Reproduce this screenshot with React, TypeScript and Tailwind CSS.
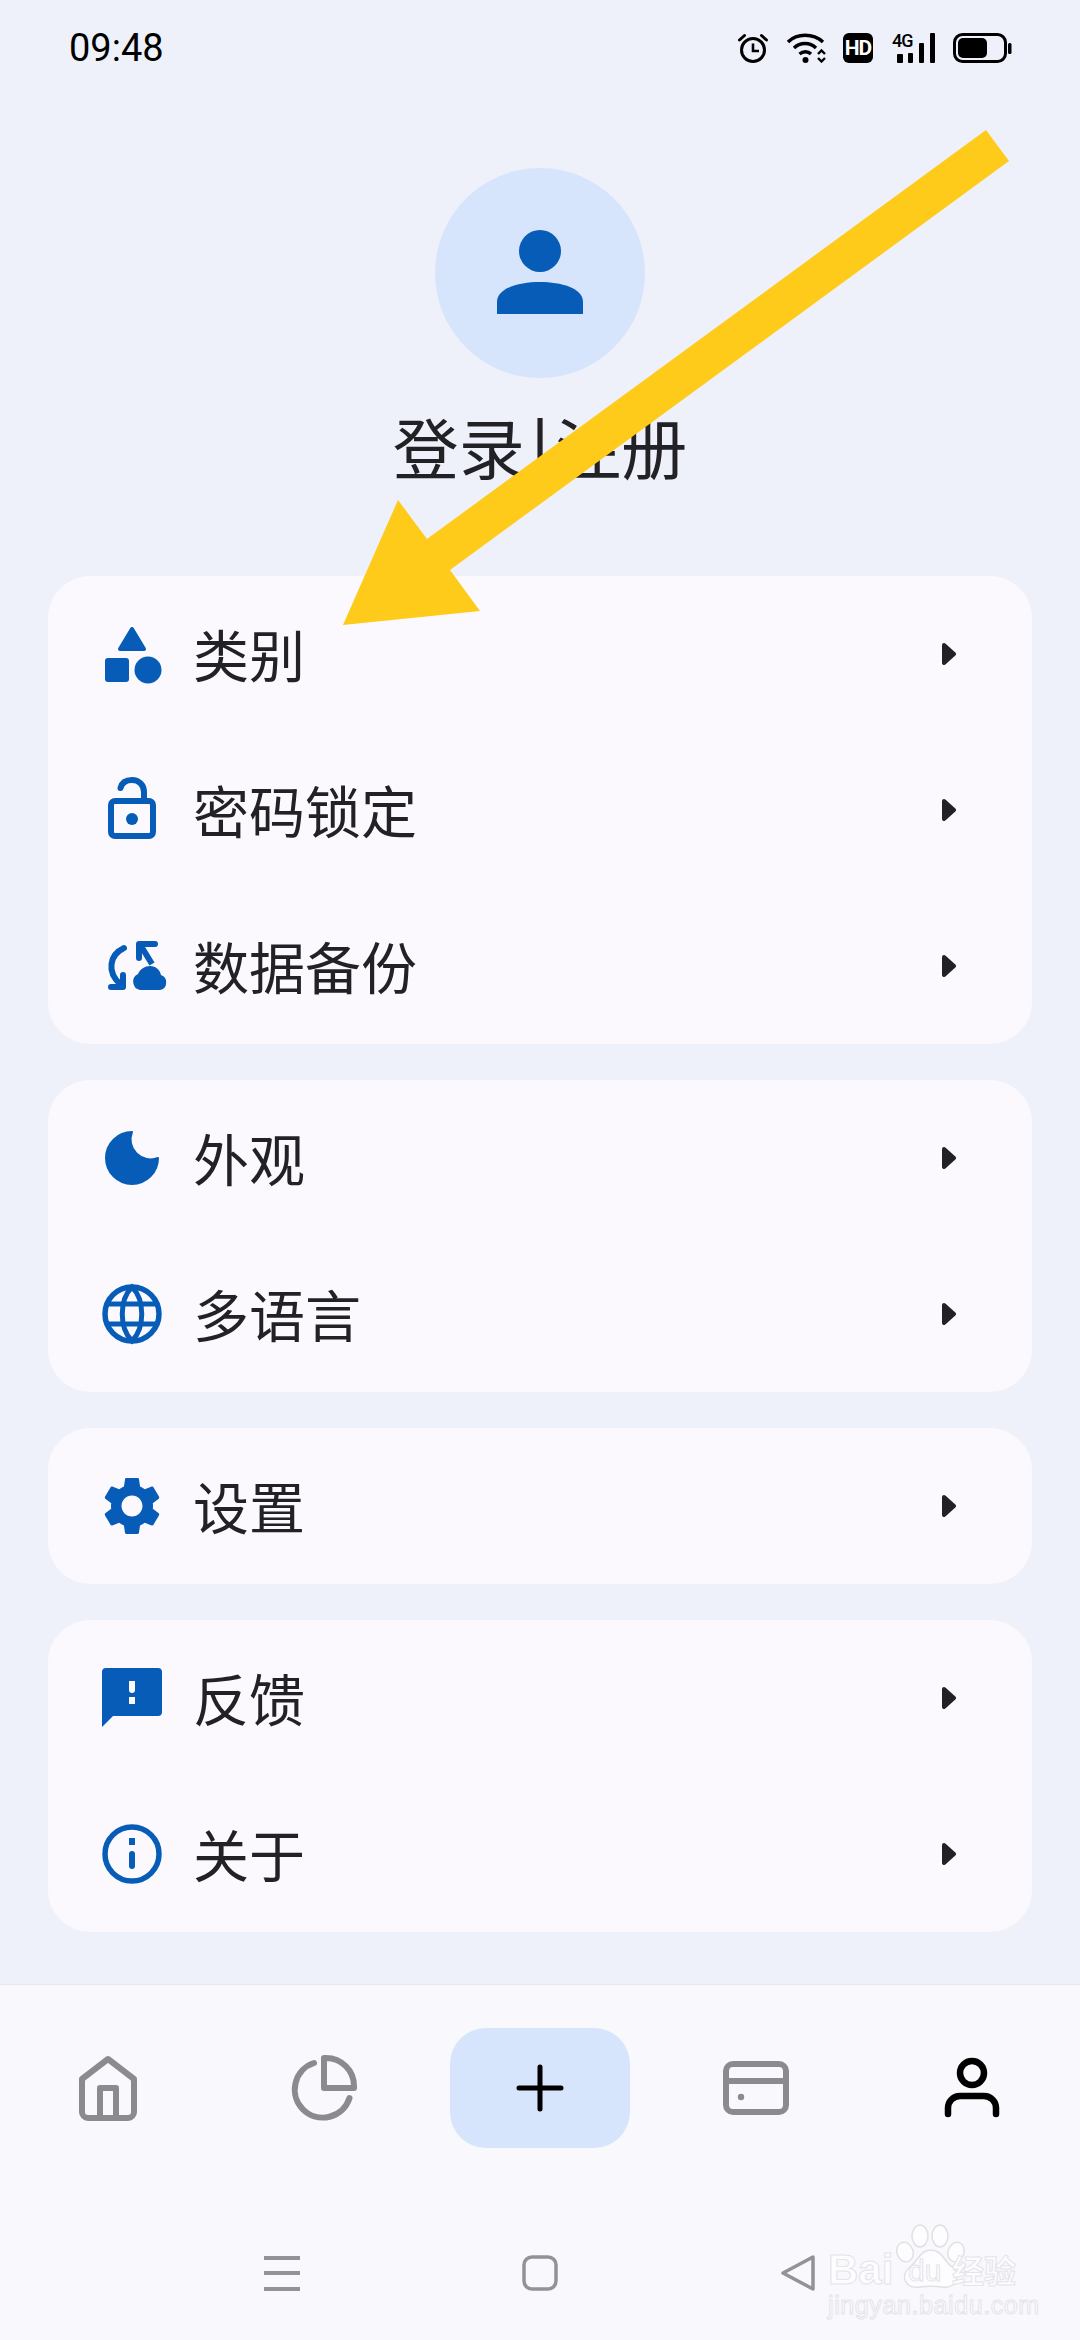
import type { ReactNode } from "react";

const BLUE = "#065cb6";
const GRAY = "#8b8b8f";

function Box({ children, size = 64 }: { children: ReactNode; size?: number }) {
  return (
    <svg width={size} height={size} viewBox="0 0 64 64" className="shrink-0 overflow-visible">
      {children}
    </svg>
  );
}

const CategoryIcon = () => (
  <Box>
    <path d="M32 7 L44 27 H20 Z" fill={BLUE} stroke={BLUE} strokeWidth="4" strokeLinejoin="round" />
    <rect x="5" y="36" width="24" height="24" rx="3" fill={BLUE} />
    <circle cx="48" cy="48" r="13.5" fill={BLUE} />
  </Box>
);

const LockIcon = () => (
  <Box>
    <rect x="11" y="23" width="42" height="35" rx="4" fill="none" stroke={BLUE} strokeWidth="6" />
    <circle cx="32" cy="41" r="6" fill={BLUE} />
    <path d="M20.5 10 C22 4 27 2 32 2 C39 2 44 7 44 14 V22" fill="none" stroke={BLUE} strokeWidth="6" strokeLinecap="round" />
  </Box>
);

const BackupIcon = () => (
  <Box>
    <g fill="none" stroke={BLUE} strokeWidth="6" strokeLinecap="round" strokeLinejoin="round">
      <path d="M24 14 C9 21 7 38 20 50" />
      <path d="M23 41 V53 H11" />
      <path d="M55 10 H39 V24" />
      <path d="M41 12 L52 30" strokeLinecap="butt" />
    </g>
    <path d="M40 56 A8.5 8.5 0 0 1 38 40 C40 35 45 32 50 32 C56 32 60 36 61 41 A7.8 7.8 0 0 1 60 56 Z" fill={BLUE} />
  </Box>
);

const MoonIcon = () => (
  <Box>
    <path d="M32 6 A26 26 0 1 0 58 32 A20 20 0 0 1 32 6 Z" fill={BLUE} stroke={BLUE} strokeWidth="2" strokeLinejoin="round" />
  </Box>
);

const GlobeIcon = () => (
  <Box>
    <g fill="none" stroke={BLUE}>
      <circle cx="32" cy="32" r="27" strokeWidth="5.5" />
      <path d="M32 5 C19 18 19 46 32 59 C45 46 45 18 32 5 Z" strokeWidth="5" />
      <path d="M6 22 H58 M6 42 H58" strokeWidth="5" />
    </g>
  </Box>
);

const GearIcon = () => (
  <Box>
    <svg x="-3" y="-3" width="70" height="70" viewBox="0 0 24 24">
      <path
        fill={BLUE}
        d="M19.14 12.94c.04-.3.06-.61.06-.94 0-.32-.02-.64-.07-.94l2.03-1.58c.18-.14.23-.41.12-.61l-1.92-3.32c-.12-.22-.37-.29-.59-.22l-2.39.96c-.5-.38-1.03-.7-1.62-.94l-.36-2.54c-.04-.24-.24-.41-.48-.41h-3.84c-.24 0-.43.17-.47.41l-.36 2.54c-.59.24-1.13.57-1.62.94l-2.39-.96c-.22-.08-.47 0-.59.22L2.74 8.87c-.12.21-.08.47.12.61l2.03 1.58c-.05.3-.09.63-.09.94s.02.64.07.94l-2.03 1.58c-.18.14-.23.41-.12.61l1.92 3.32c.12.22.37.29.59.22l2.39-.96c.5.38 1.03.7 1.62.94l.36 2.54c.05.24.24.41.48.41h3.84c.24 0 .44-.17.47-.41l.36-2.54c.59-.24 1.13-.56 1.62-.94l2.39.96c.22.08.47 0 .59-.22l1.92-3.32c.12-.22.07-.47-.12-.61l-2.01-1.58zM12 15.6c-1.98 0-3.6-1.62-3.6-3.6s1.62-3.6 3.6-3.6 3.6 1.62 3.6 3.6-1.62 3.6-3.6 3.6z"
      />
    </svg>
  </Box>
);

const FeedbackIcon = () => (
  <Box>
    <path
      fillRule="evenodd"
      fill={BLUE}
      d="M6 2 H58 A4 4 0 0 1 62 6 V46 A4 4 0 0 1 58 50 H13 L2 61 V6 A4 4 0 0 1 6 2 Z M29 15 V24 A3 3 0 0 0 35 24 V15 Z M29 31 V38 H35 V31 Z"
    />
  </Box>
);

const InfoIcon = () => (
  <Box>
    <circle cx="32" cy="32" r="27" fill="none" stroke={BLUE} strokeWidth="5.5" />
    <rect x="29" y="16" width="6" height="7" fill={BLUE} />
    <path d="M32 32 V44" stroke={BLUE} strokeWidth="6" strokeLinecap="round" />
  </Box>
);

const Chevron = () => (
  <svg width="14" height="22" viewBox="0 0 14 22" className="shrink-0">
    <path d="M2 2 L12 11 L2 20 Z" fill="#222226" stroke="#222226" strokeWidth="4" strokeLinejoin="round" />
  </svg>
);

function Row({ icon, label }: { icon: ReactNode; label: string }) {
  return (
    <div className="flex h-[156px] items-center pl-[52px] pr-[76px]">
      {icon}
      <span className="ml-[29px] mb-[3px] flex-1 text-[56px] leading-none text-[#222226]">{label}</span>
      <Chevron />
    </div>
  );
}

function Card({ children }: { children: ReactNode }) {
  return <div className="rounded-[42px] bg-[#fbf9fe]">{children}</div>;
}

function StatusIcons() {
  return (
    <div className="flex items-center">
      {/* alarm */}
      <svg width="30" height="30" viewBox="0 0 30 30" className="overflow-visible">
        <g fill="none" stroke="#000" strokeWidth="3">
          <circle cx="15" cy="17" r="11.5" />
          <path d="M15 10.5 V18 H21" strokeWidth="2.6" />
          <path d="M1.5 7 L6.5 2.5 M28.5 7 L23.5 2.5" strokeLinecap="round" />
        </g>
      </svg>
      {/* wifi */}
      <svg width="41" height="30" viewBox="0 0 41 30" className="ml-[19px]">
        <g fill="none" stroke="#000" strokeWidth="3.4">
          <path d="M1 9 C10 0 26 0 36 9" />
          <path d="M7 15 C13 9 23 9 29 15" />
          <path d="M12.5 21 C16 18 21 18 24 21" />
        </g>
        <circle cx="18.5" cy="27" r="3" fill="#000" />
        <path d="M31 21 L34.5 17.5 L38 21 M31 25 L34.5 28.5 L38 25" fill="none" stroke="#000" strokeWidth="2.4" />
      </svg>
      <div className="ml-[15px] flex h-[30px] w-[30px] items-center justify-center rounded-[6px] bg-black font-['Roboto',sans-serif] text-[21px] font-bold leading-none tracking-[-1px] text-white">
        HD
      </div>
      {/* 4G + signal */}
      <div className="relative ml-[19px] h-[30px] w-[43px]">
        <span className="absolute left-0 top-0 font-['Roboto',sans-serif] text-[18px] font-medium leading-[16px] tracking-[-1px] text-black">4G</span>
        <svg width="43" height="30" viewBox="0 0 43 30" className="absolute left-0 top-0">
          <rect x="5" y="21" width="6" height="9" rx="1" />
          <rect x="16" y="20" width="5" height="10" rx="1" />
          <rect x="27" y="10" width="5" height="20" rx="1" />
          <rect x="38" y="0" width="5" height="30" rx="1" />
        </svg>
      </div>
      {/* battery */}
      <svg width="59" height="30" viewBox="0 0 59 30" className="ml-[18px]">
        <rect x="1.5" y="1.5" width="51" height="27" rx="8" fill="none" stroke="#000" strokeWidth="3" />
        <rect x="5" y="5" width="29" height="20" rx="5" fill="#000" />
        <rect x="55" y="10" width="3.5" height="11" rx="1.5" fill="#000" />
      </svg>
    </div>
  );
}

function Watermark() {
  return (
    <div className="absolute left-[820px] top-[2220px] h-[105px] w-[210px] font-['Liberation_Sans',sans-serif] text-[#fdfdff] [-webkit-text-stroke:1px_#e4e4e9]">
      <span className="absolute left-[8px] top-[29px] text-[42px] font-bold leading-none">Bai</span>
      <svg width="70" height="72" viewBox="0 0 70 72" className="absolute left-[76px] top-[3px]">
        <g fill="#fdfdff" stroke="#e0e0e5" strokeWidth="1.5">
          <ellipse cx="24" cy="13" rx="8" ry="11" />
          <ellipse cx="44" cy="13" rx="8" ry="11" />
          <ellipse cx="9" cy="29" rx="8" ry="10" transform="rotate(-20 9 29)" />
          <ellipse cx="60" cy="29" rx="8" ry="10" transform="rotate(20 60 29)" />
          <path d="M35 27 C46 27 48 38 56 44 C66 52 60 66 46 64 C38 63 31 63 24 64 C8 66 4 52 14 44 C22 38 24 27 35 27 Z" />
        </g>
      </svg>
      <span className="absolute left-[88px] top-[36px] text-[30px] leading-none">du</span>
      <span className="absolute left-[132px] top-[33px] font-['Noto_Sans_CJK_SC',sans-serif] text-[32px] font-bold leading-none">经验</span>
      <span className="absolute left-[8px] top-[73px] text-[25px] leading-none tracking-[0.6px]">jingyan.baidu.com</span>
    </div>
  );
}

export default function App() {
  return (
    <div className="relative flex h-[2340px] w-[1080px] flex-col overflow-hidden bg-[#eef1f9] font-['Noto_Sans_CJK_SC',sans-serif]">
      {/* Status bar */}
      <div className="flex h-[96px] items-center justify-between pl-[69px] pr-[68px]">
        <span className="font-['Roboto',sans-serif] text-[38px] leading-none text-black">09:48</span>
        <StatusIcons />
      </div>

      {/* Profile */}
      <div className="mt-[72px] flex flex-col items-center">
        <div className="flex h-[210px] w-[210px] items-center justify-center rounded-full bg-[#d6e4fc]">
          <svg width="86" height="86" viewBox="0 0 86 86">
            <circle cx="43" cy="21" r="21" fill={BLUE} />
            <path d="M0 84 V72 C0 58 22 52 43 52 C64 52 86 58 86 72 V84 Z" fill={BLUE} />
          </svg>
        </div>
        <div className="mt-[21px] mb-[3px] flex h-[92px] items-center text-[66px] leading-none text-[#222226]">
          登录<span className="mx-[6px] font-medium">|</span>注册
        </div>
      </div>

      {/* Menu */}
      <div className="mt-[82px] flex flex-col gap-[36px] px-[48px] pb-[52px]">
        <Card>
          <Row icon={<CategoryIcon />} label="类别" />
          <Row icon={<LockIcon />} label="密码锁定" />
          <Row icon={<BackupIcon />} label="数据备份" />
        </Card>
        <Card>
          <Row icon={<MoonIcon />} label="外观" />
          <Row icon={<GlobeIcon />} label="多语言" />
        </Card>
        <Card>
          <Row icon={<GearIcon />} label="设置" />
        </Card>
        <Card>
          <Row icon={<FeedbackIcon />} label="反馈" />
          <Row icon={<InfoIcon />} label="关于" />
        </Card>
      </div>

      {/* Bottom nav */}
      <div className="flex flex-1 flex-col border-t border-[#e6e8ef] bg-[#f8f8fd]">
        <div className="mt-[43px] grid grid-cols-5">
          <div className="flex h-[120px] items-center justify-center">
            <svg width="72" height="72" viewBox="0 0 72 72" fill="none" stroke={GRAY} strokeWidth="6" strokeLinejoin="round">
              <path d="M36 7 L10 27 V60 A6 6 0 0 0 16 66 H56 A6 6 0 0 0 62 60 V27 Z" />
              <path d="M28 66 V36 H44 V66" />
            </svg>
          </div>
          <div className="flex h-[120px] items-center justify-center">
            <svg width="72" height="72" viewBox="0 0 72 72" fill="none" stroke={GRAY} strokeWidth="6" strokeLinejoin="round" strokeLinecap="round">
              <path d="M26 11 A28 28 0 1 0 61.5 46" />
              <path d="M36 6 H38 A28 28 0 0 1 66 34 V36 H36 Z" />
            </svg>
          </div>
          <div className="flex h-[120px] items-center justify-center">
            <div className="flex h-[120px] w-[180px] items-center justify-center rounded-[36px] bg-[#d6e4fc]">
              <svg width="48" height="48" viewBox="0 0 48 48" stroke="#000" strokeWidth="5" strokeLinecap="round">
                <path d="M3 24 H45 M24 3 V45" />
              </svg>
            </div>
          </div>
          <div className="flex h-[120px] items-center justify-center">
            <svg width="72" height="72" viewBox="0 0 72 72" fill="none" stroke={GRAY} strokeWidth="6">
              <rect x="6" y="12" width="60" height="48" rx="7" />
              <path d="M6 29 H66" />
              <circle cx="21" cy="45" r="3.2" fill={GRAY} stroke="none" />
            </svg>
          </div>
          <div className="flex h-[120px] items-center justify-center">
            <svg width="72" height="72" viewBox="0 0 72 72" fill="none" stroke="#000" strokeWidth="6.5" strokeLinecap="round">
              <circle cx="36" cy="21" r="12" />
              <path d="M12 62 V56 A12 12 0 0 1 24 44 H48 A12 12 0 0 1 60 56 V62" />
            </svg>
          </div>
        </div>

        {/* System nav */}
        <div className="mt-[107px] flex justify-center gap-[222px]">
          <svg width="36" height="36" viewBox="0 0 36 36" stroke="#939397" strokeWidth="4">
            <path d="M0 3 H36 M0 18 H36 M0 34 H36" />
          </svg>
          <svg width="36" height="36" viewBox="0 0 36 36" fill="none" stroke="#939397" strokeWidth="3.5">
            <rect x="2" y="2" width="32" height="32" rx="8" />
          </svg>
          <svg width="36" height="36" viewBox="0 0 36 36" fill="none" stroke="#939397" strokeWidth="3.5" strokeLinejoin="round">
            <path d="M3 18 L33 2 V34 Z" />
          </svg>
        </div>
      </div>

      <Watermark />

      {/* Annotation arrow drawn on top of the screenshot */}
      <svg width="1080" height="2340" viewBox="0 0 1080 2340" className="pointer-events-none absolute left-0 top-0">
        <polygon points="986,130 1009,161 450,570 480,611 343,625 398,500 427,539" fill="#fecb1b" />
      </svg>
    </div>
  );
}
